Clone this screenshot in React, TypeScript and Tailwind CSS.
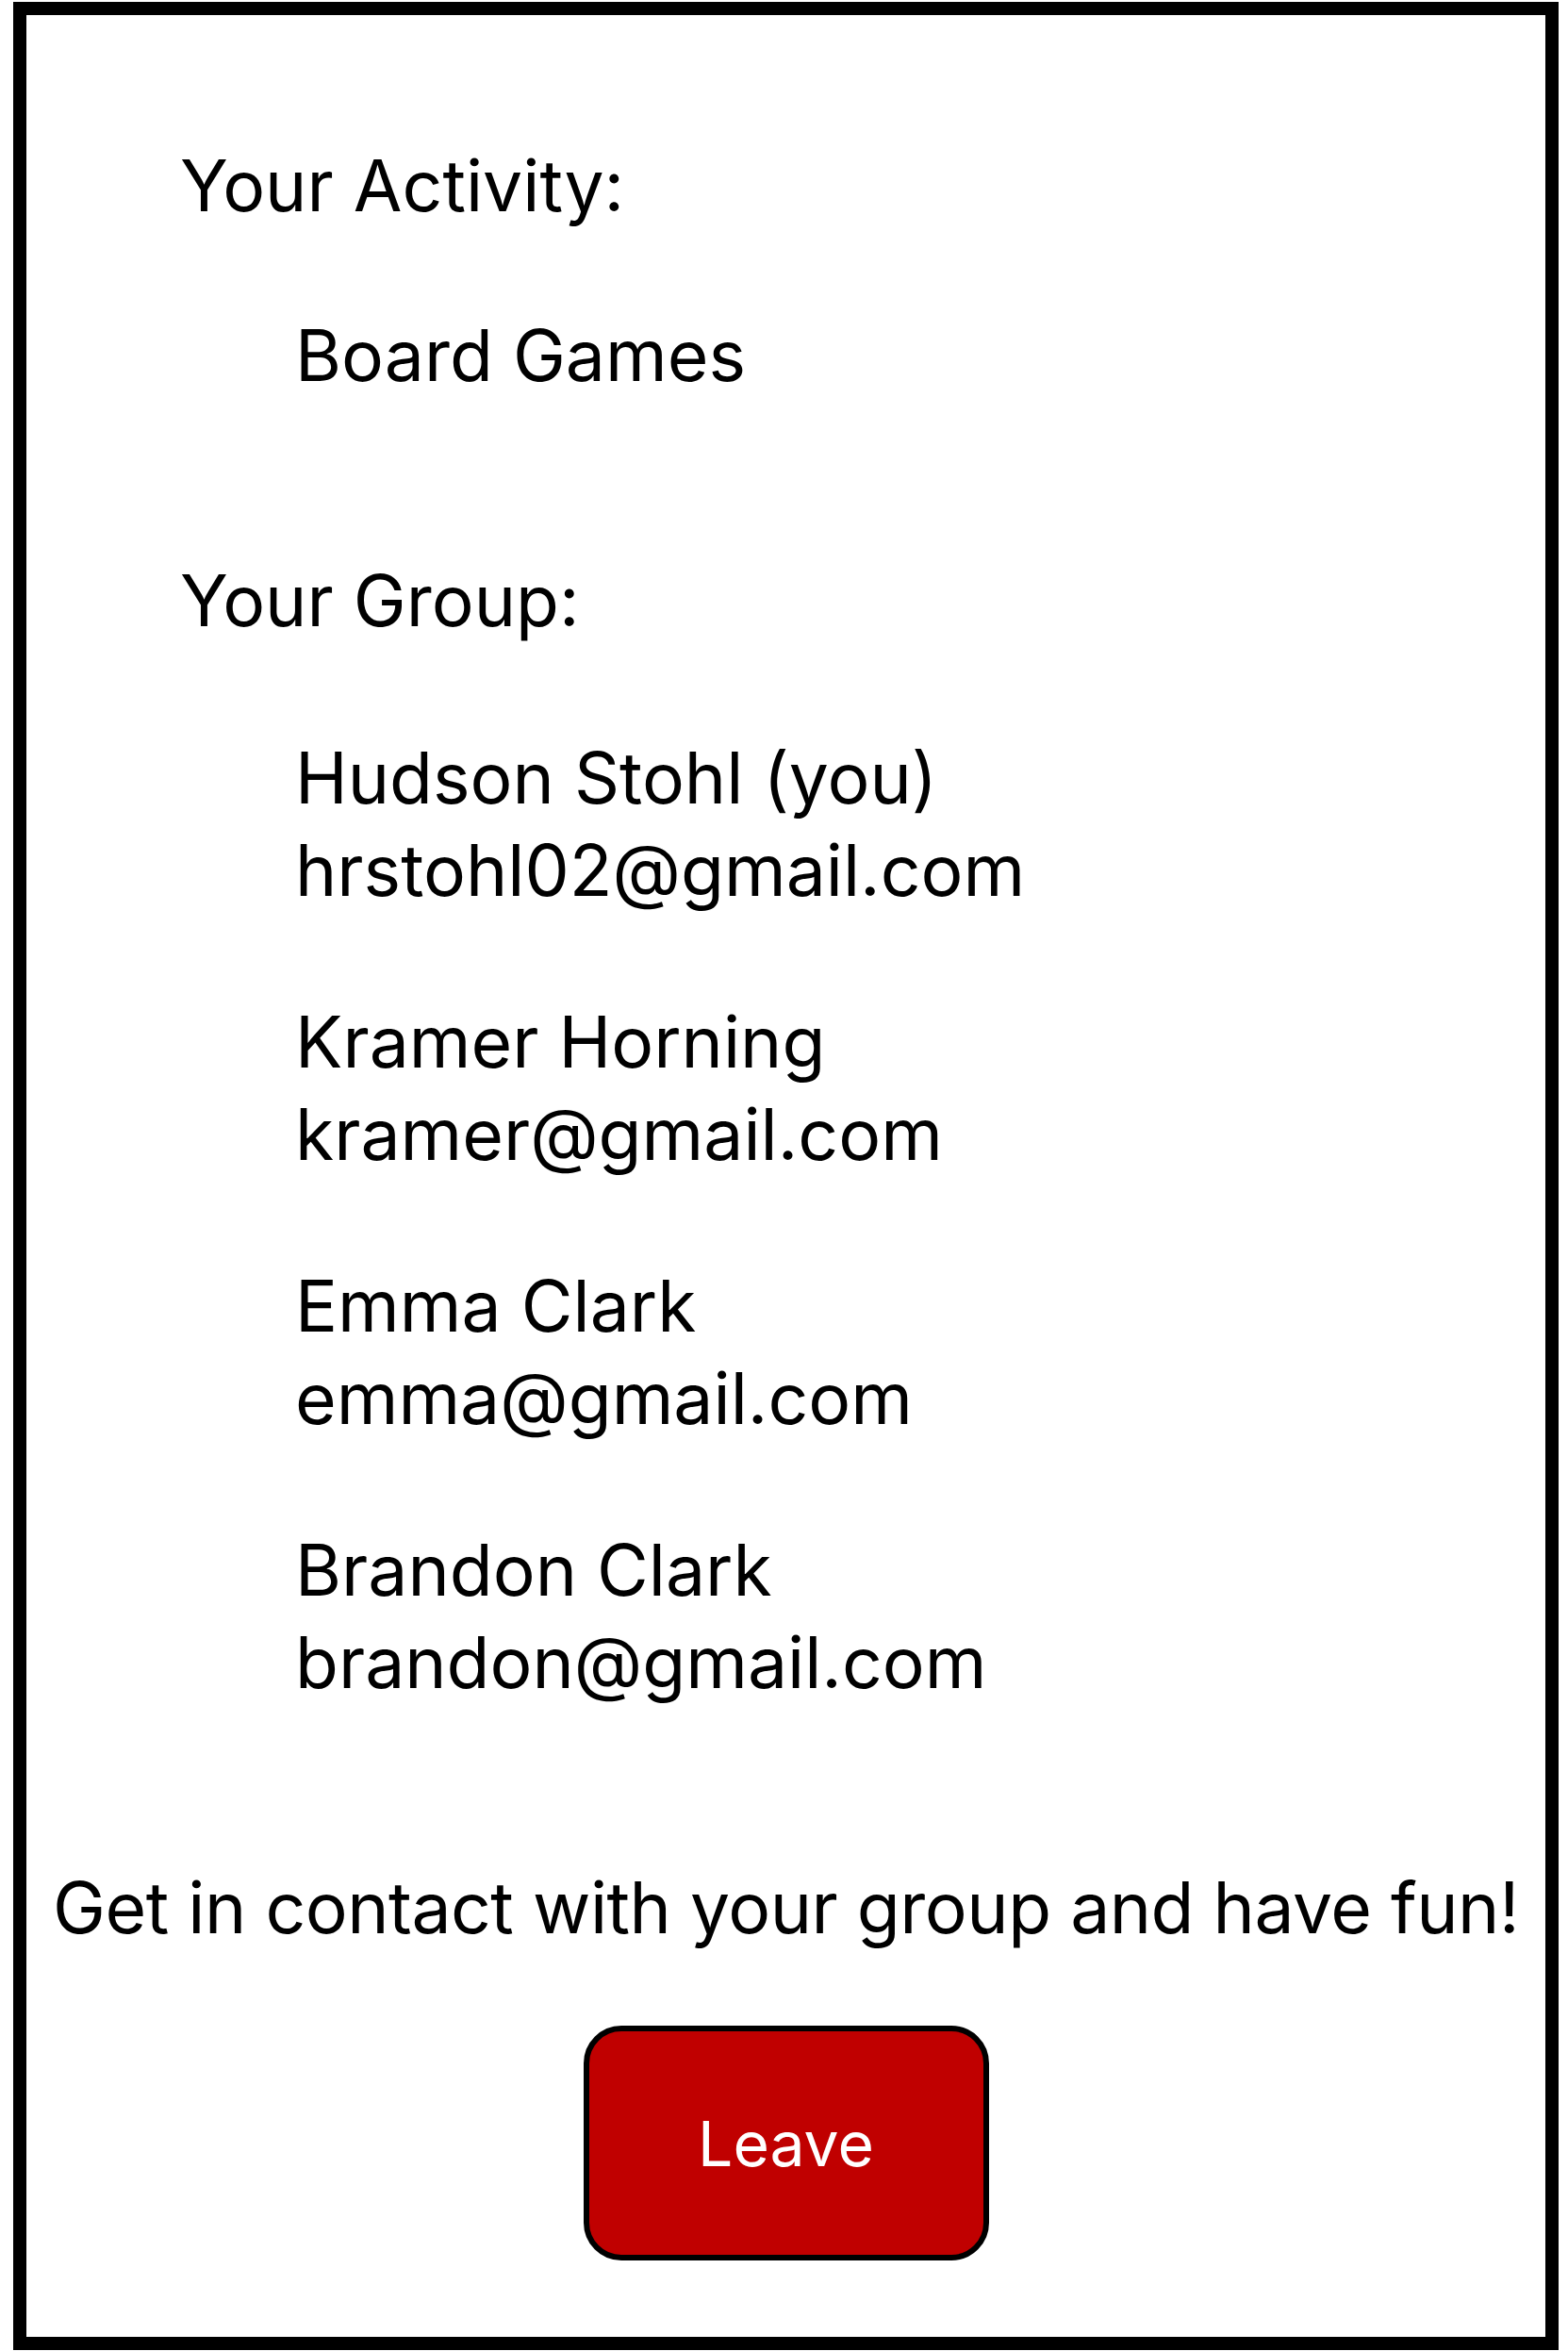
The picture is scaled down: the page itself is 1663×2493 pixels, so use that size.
const members = [
  { name: 'Hudson Stohl (you)', email: 'hrstohl02@gmail.com' },
  { name: 'Kramer Horning', email: 'kramer@gmail.com' },
  { name: 'Emma Clark', email: 'emma@gmail.com' },
  { name: 'Brandon Clark', email: 'brandon@gmail.com' },
];

export default function App() {
  return (
    <div className="min-h-screen bg-white pt-[2px] pl-[14px]">
      <div
        className="w-[1639px] h-[2490px] border-[14px] border-black flex flex-col text-black text-[75px] leading-[98px]"
        style={{ fontFamily: 'Inter, "Noto Sans", sans-serif' }}
      >
        <div className="pt-[132px] pl-[163px]">
          <p>Your Activity:</p>
          <p className="pl-[122px] mt-[82px]">Board Games</p>
          <p className="mt-[162px]">Your Group:</p>
          <div className="pl-[122px] mt-[90px] flex flex-col gap-[84px]">
            {members.map((m) => (
              <div key={m.email}>
                <p>{m.name}</p>
                <p>{m.email}</p>
              </div>
            ))}
          </div>
        </div>
        <p className="mt-[162px] text-center tracking-[-0.5px]">Get in contact with your group and have fun!</p>
        <div className="mt-[76px] flex justify-center">
          <button className="w-[430px] h-[249px] rounded-[40px] border-[6px] border-black bg-[#c00000] text-white text-[66px]">
            Leave
          </button>
        </div>
      </div>
    </div>
  );
}
